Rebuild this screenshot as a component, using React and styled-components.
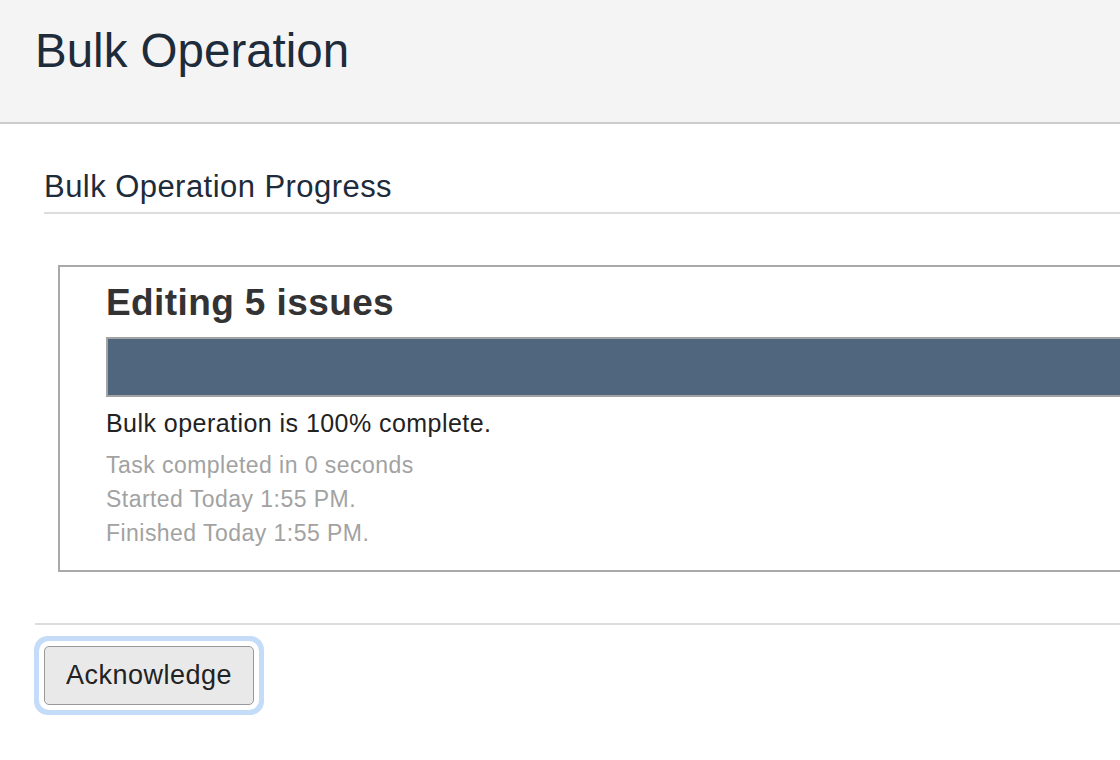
import React from "react";
import styled, { createGlobalStyle } from "styled-components";

const GlobalStyle = createGlobalStyle`
  html, body {
    margin: 0;
    padding: 0;
    background: #fff;
    overflow: hidden;
  }
  body {
    font-family: "Liberation Sans", Arial, Helvetica, sans-serif;
  }
`;

const Page = styled.div`
  width: 1400px;
  min-height: 760px;
  background: #fff;
`;

const Header = styled.header`
  box-sizing: border-box;
  height: 124px;
  padding: 27px 35px 0;
  background: #f4f4f4;
  border-bottom: 2px solid #cccccc;
`;

const Title = styled.h1`
  margin: 0;
  font-size: 47.5px;
  line-height: 48px;
  font-weight: normal;
  color: #1e2b3b;
`;

const Content = styled.main`
  padding: 48px 0 0 35px;
`;

const Section = styled.section`
  margin-left: 9px;
`;

const SectionTitle = styled.h2`
  margin: 0;
  padding-bottom: 10px;
  font-size: 31px;
  line-height: 30px;
  letter-spacing: 0.45px;
  font-weight: normal;
  color: #1e2b3b;
  border-bottom: 2px solid #dddddd;
`;

const ProgressBox = styled.div`
  margin: 51px 0 0 14px;
  padding: 18px 46px 20px;
  border: 2px solid #a9a9a9;
`;

const TaskHeading = styled.h3`
  margin: 0 0 16px;
  font-size: 37px;
  line-height: 36px;
  letter-spacing: 0.4px;
  font-weight: bold;
  color: #333;
`;

const Bar = styled.div`
  box-sizing: border-box;
  height: 60px;
  border: 2px solid #a3a3a3;
  background: #e9e9e9;
`;

const Fill = styled.div`
  height: 100%;
  background: #50667f;
`;

const Status = styled.p`
  margin: 9px 0 8px;
  font-size: 25px;
  line-height: 34px;
  letter-spacing: 0.45px;
  color: #222;
`;

const Meta = styled.div`
  font-size: 23px;
  line-height: 34px;
  letter-spacing: 0.46px;
  color: #a2a2a2;
`;

const Divider = styled.hr`
  margin: 51px 0 0;
  border: 0;
  border-top: 2px solid #dddddd;
`;

const Actions = styled.div`
  padding: 21px 0 0 9px;
`;

const Button = styled.button`
  box-sizing: border-box;
  width: 210px;
  height: 59px;
  padding: 0;
  font-family: "Liberation Sans", Arial, Helvetica, sans-serif;
  font-size: 27px;
  letter-spacing: 0.5px;
  color: #222;
  background: #e9e9e9;
  border: 1.5px solid #999;
  border-radius: 5px;
  box-shadow: 0 0 0 5px #fff, 0 0 0 10px #c5dcf9;
  outline: none;
  cursor: pointer;
`;

const App = () => {
  const percent = 100;
  const meta = [
    "Task completed in 0 seconds",
    "Started Today 1:55 PM.",
    "Finished Today 1:55 PM.",
  ];

  return (
    <Page>
      <GlobalStyle />
      <Header>
        <Title>Bulk Operation</Title>
      </Header>
      <Content>
        <Section>
          <SectionTitle>Bulk Operation Progress</SectionTitle>
          <ProgressBox>
            <TaskHeading>Editing 5 issues</TaskHeading>
            <Bar>
              <Fill style={{ width: `${percent}%` }} />
            </Bar>
            <Status>Bulk operation is {percent}% complete.</Status>
            <Meta>
              {meta.map((line) => (
                <div key={line}>{line}</div>
              ))}
            </Meta>
          </ProgressBox>
        </Section>
        <Divider />
        <Actions>
          <Button>Acknowledge</Button>
        </Actions>
      </Content>
    </Page>
  );
};

export default App;
